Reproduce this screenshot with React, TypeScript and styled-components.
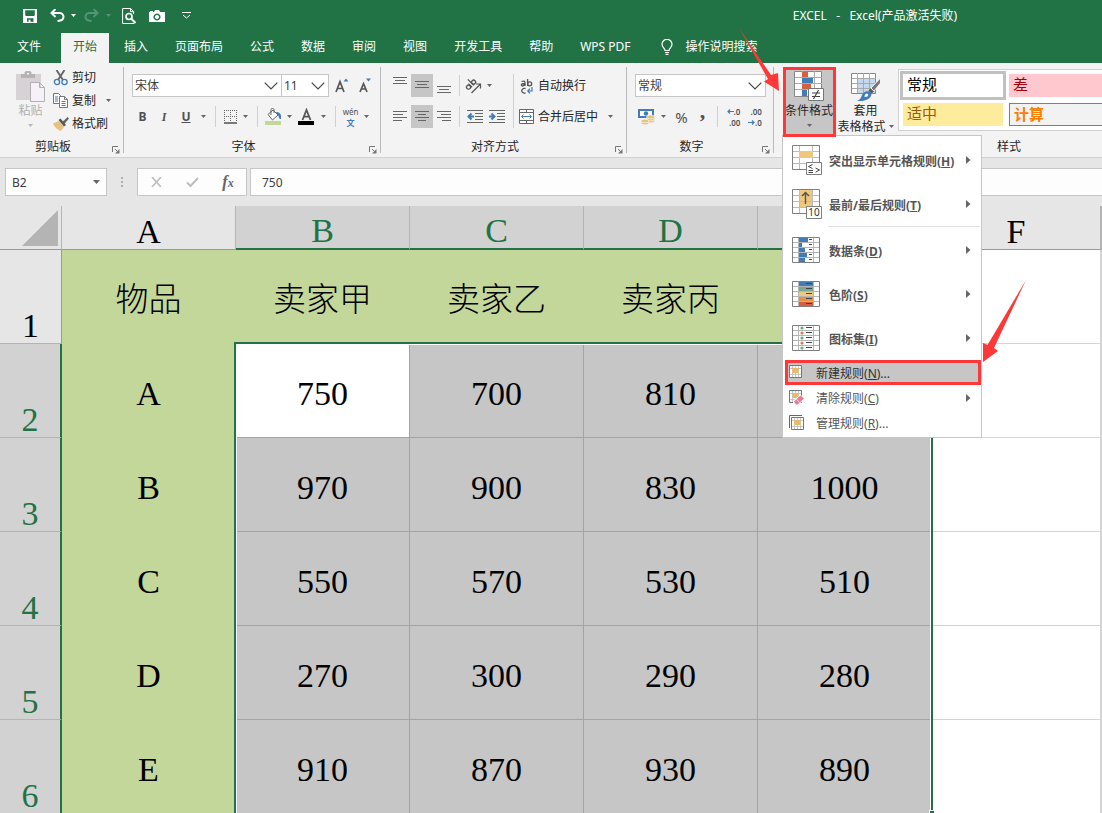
import React from "react";
import styled, { createGlobalStyle, css } from "styled-components";

const UI_FONT = '"Noto Sans", "Noto Sans CJK SC", sans-serif';
const SHEET_FONT = '"Liberation Serif", "Noto Sans CJK SC", serif';
const GREEN = "#217346";
const RED = "#fd3838";
const INK = "#262626";
const BLUE = "#3f7cb8";

const GlobalStyle = createGlobalStyle`
  * { box-sizing: border-box; }
  html, body { margin: 0; height: 100%; overflow: hidden; }
  #root { height: 100%; }
  button, input, select { font: inherit; color: inherit; margin: 0; }
  svg { display: block; flex: none; }
`;

const Page = styled.div`
  display: flex;
  flex-direction: column;
  height: 100vh;
  overflow: hidden;
  background: #fff;
  color: ${INK};
  font: 12px/16px ${UI_FONT};
`;

/* ---------- title bar and tabs ---------- */

const TitleBar = styled.header`
  display: flex;
  align-items: center;
  height: 33px;
  flex: none;
  padding: 0 145px 2px 16px;
  background: ${GREEN};
  color: #fff;
`;

const QuickAccess = styled.div`
  display: flex;
  align-items: center;
`;

const QuickButton = styled.button<{ $w: number; $dim?: boolean }>`
  display: flex;
  align-items: center;
  justify-content: center;
  width: ${(p) => p.$w}px;
  height: 24px;
  padding: 0;
  border: 0;
  background: none;
  color: ${(p) => (p.$dim ? "#559474" : "#fff")};
`;

const WindowTitle = styled.h1`
  margin: 0 0 0 auto;
  font-size: 12px;
  line-height: 16px;
  font-weight: 400;
  white-space: pre;
`;

const TabBar = styled.nav`
  display: flex;
  flex: none;
  gap: 3px;
  height: 30px;
  background: ${GREEN};
`;

const Tab = styled.button<{ $active?: boolean; $file?: boolean }>`
  display: flex;
  align-items: center;
  height: 30px;
  padding: 0 ${(p) => (p.$file ? 17 : 12)}px 2px;
  border: 0;
  background: ${(p) => (p.$active ? "#f3f3f3" : "none")};
  color: ${(p) => (p.$active ? GREEN : "#fff")};
  white-space: nowrap;
`;

const TellMe = styled(Tab)`
  gap: 13px;
  padding-left: 15px;
`;

/* ---------- ribbon ---------- */

const Ribbon = styled.section`
  position: relative;
  z-index: 2;
  display: flex;
  flex: none;
  height: 95px;
  border-bottom: 1px solid #d2d2d2;
  background: #f3f3f3;
`;

const Group = styled.div<{ $w?: number }>`
  display: flex;
  flex-direction: column;
  ${(p) => (p.$w ? css`flex: 0 0 ${p.$w}px;` : css`flex: 1; min-width: 0;`)}
`;

const Divider = styled.div`
  width: 1px;
  flex: none;
  margin: 4px 0;
  background: #b8b8b8;
`;

const GroupBody = styled.div<{ $x?: number; $y?: number }>`
  display: flex;
  height: 73px;
  padding: ${(p) => p.$y ?? 11}px 0 0 ${(p) => p.$x ?? 8}px;
`;

const GroupFooter = styled.div<{ $indent?: number }>`
  display: flex;
  align-items: center;
  height: 21px;
  padding: 0 3px 0 ${(p) => p.$indent ?? 0}px;
`;

const GroupLabel = styled.span`
  flex: 1;
  text-align: center;
`;

const Launcher = styled.button`
  display: flex;
  flex: none;
  margin-left: 6px;
  padding: 6px 0 0;
  width: 8px;
  border: 0;
  background: none;
`;

const Rows = styled.div`
  display: flex;
  flex-direction: column;
  gap: 8px;
`;

const Row = styled.div`
  display: flex;
  align-items: center;
  height: 23px;
`;

const Tool = styled.button<{ $w?: number; $active?: boolean }>`
  display: flex;
  align-items: center;
  justify-content: center;
  flex: none;
  width: ${(p) => p.$w ?? 22}px;
  height: 23px;
  padding: 0;
  border: 0;
  background: ${(p) => (p.$active ? "#c6c6c6" : "none")};
  color: #505050;
`;

const Glyph = styled.span<{ $italic?: boolean; $under?: boolean }>`
  font-size: 12px;
  font-weight: 700;
  font-family: ${(p) => (p.$italic ? '"Liberation Serif", serif' : UI_FONT)};
  font-style: ${(p) => (p.$italic ? "italic" : "normal")};
  text-decoration: ${(p) => (p.$under ? "underline" : "none")};
`;

const ToolSeparator = styled.span<{ $w?: number; $tall?: boolean }>`
  display: flex;
  justify-content: center;
  flex: none;
  width: ${(p) => p.$w ?? 13}px;
  height: ${(p) => (p.$tall ? 54 : 21)}px;
  &::before {
    content: "";
    width: 1px;
    background: #d0d0d0;
  }
`;

const TextTool = styled.button`
  display: flex;
  align-items: center;
  gap: 3px;
  height: 23px;
  padding: 0;
  border: 0;
  background: none;
  color: ${INK};
  white-space: nowrap;
`;

const SmallButtons = styled.div`
  display: flex;
  flex-direction: column;
`;

const BigButton = styled.button<{ $w: number; $muted?: boolean; $active?: boolean; $top?: number }>`
  display: flex;
  flex-direction: column;
  align-items: center;
  gap: 1px;
  flex: none;
  width: ${(p) => p.$w}px;
  height: 70px;
  padding: ${(p) => p.$top ?? 5}px 0 0;
  border: 0;
  background: ${(p) => (p.$active ? "#c6c6c6" : "none")};
  color: ${(p) => (p.$muted ? "#b0b0b0" : INK)};
  line-height: 16px;
  white-space: nowrap;
`;

const BigLine = styled.span`
  display: flex;
  align-items: center;
  gap: 3px;
  line-height: 15px;
`;

const CaretLine = styled.span`
  display: flex;
  align-items: center;
  height: 11px;
`;

const Stack = styled.label<{ $w: number }>`
  display: grid;
  grid-template: 23px / 1fr;
  width: ${(p) => p.$w}px;
  margin-right: -1px;
  align-items: center;
  > * { grid-area: 1 / 1; }
  > svg { justify-self: end; margin-right: 4px; pointer-events: none; }
`;

const Picker = styled.select`
  appearance: none;
  width: 100%;
  height: 23px;
  padding: 0 0 0 2px;
  border: 1px solid #c6c6c6;
  border-radius: 0;
  background: #fff;
  color: #404040;
`;

/* ---------- conditional formatting button and menu ---------- */

const MenuAnchor = styled.div`
  position: relative;
  flex: none;
`;

const Highlight = styled.span`
  position: absolute;
  inset: 0 -1px -1px 0;
  z-index: 2;
  border: 3px solid ${RED};
  pointer-events: none;
`;

const ArrowToButton = styled.svg`
  position: absolute;
  right: 100%;
  top: -39px;
  margin-right: 3px;
  pointer-events: none;
`;

const ArrowToItem = styled.svg`
  position: absolute;
  left: 100%;
  top: 143px;
  pointer-events: none;
`;

const Menu = styled.div`
  position: absolute;
  z-index: 1;
  top: 68px;
  left: -1px;
  width: 200px;
  padding: 2px 0;
  border: 1px solid #c6c6c6;
  background: #fff;
`;

const MenuText = styled.span`
  flex: 1;
  padding-top: 2px;
`;

const MenuItem = styled.button<{ $large?: boolean; $picked?: boolean }>`
  display: flex;
  align-items: center;
  height: ${(p) => (p.$large ? 44 : 25)}px;
  padding: 0 10px 0 ${(p) => (p.$large ? 9 : 6)}px;
  gap: ${(p) => (p.$large ? 7 : 12)}px;
  border: 0;
  background: none;
  color: #555;
  font-weight: ${(p) => (p.$large ? 700 : 400)};
  text-align: left;
  white-space: nowrap;
  ${MenuText} { padding-top: ${(p) => (p.$large ? 4 : 2)}px; }
  ${(p) =>
    p.$picked &&
    css`
      margin-left: 2px;
      padding-left: 4px;
      background: #c6c6c6;
      color: #303030;
      outline: 3px solid ${RED};
      outline-offset: -3px;
    `}
`;

const MenuList = styled.div`
  display: flex;
  flex-direction: column;
`;

const MenuRule = styled.hr`
  width: calc(100% - 46px);
  height: 2px;
  margin: 0 1px 0 45px;
  border: 0;
  border-top: 1px solid #e1e1e1;
`;

/* ---------- style gallery ---------- */

const Gallery = styled.div`
  display: grid;
  grid-template-columns: 106px 106px;
  grid-template-rows: 29px 23px;
  row-gap: 3px;
  flex: 1;
  min-width: 0;
  height: 62px;
  margin: 2px 0 0 2px;
  padding: 1px 0 0 1px;
  border: 1px solid #d0d0d0;
  border-right: 0;
  background: #fff;
  overflow: hidden;
`;

const StyleChip = styled.button<{ $bg: string; $fg: string; $line?: string; $bold?: boolean; $current?: boolean }>`
  height: ${(p) => (p.$current ? 29 : 23)}px;
  align-self: center;
  margin: 0 ${(p) => (p.$current ? 0 : 3)}px;
  padding: 0 0 3px 4px;
  border: ${(p) => (p.$current ? "3px solid #c0c0c0" : p.$line ? `1px solid ${p.$line}` : "0")};
  background: ${(p) => p.$bg};
  color: ${(p) => p.$fg};
  font-size: 15px;
  line-height: 20px;
  font-weight: ${(p) => (p.$bold ? 700 : 400)};
  text-align: left;
`;

/* ---------- formula bar ---------- */

const FormulaBar = styled.div`
  display: flex;
  flex: none;
  height: 48px;
  padding: 10px 0 10px 5px;
  background: #e6e6e6;
`;

const Box = styled.div<{ $w?: number }>`
  display: flex;
  align-items: center;
  min-width: 0;
  flex: ${(p) => (p.$w ? `0 0 ${p.$w}px` : "1")};
  border: 1px solid #c6c6c6;
  border-right-width: ${(p) => (p.$w ? 1 : 0)}px;
  background: #fdfdfd;
`;

const PlainInput = styled.input`
  flex: 1;
  min-width: 0;
  height: 24px;
  padding: 0 0 0 6px;
  border: 0;
  outline: 0;
  background: none;
  color: #404040;
`;

const FormulaInput = styled(PlainInput)`
  padding-left: 11px;
`;

const Grip = styled.div`
  display: flex;
  flex: none;
  align-items: center;
  justify-content: center;
  width: 30px;
`;

const BarGap = styled.span`
  width: 3px;
`;

const FxGlyph = styled.span`
  font: italic 700 16px/16px "Liberation Serif", serif;
  color: #666;
`;

const FxSub = styled.span`
  font-size: 12px;
`;

/* ---------- sheet ---------- */

const Sheet = styled.main`
  position: relative;
  flex: 1;
  min-height: 0;
  overflow: hidden;
`;

const Grid = styled.table`
  width: 100%;
  table-layout: fixed;
  border-collapse: separate;
  border-spacing: 0;
  font: 34px/34px ${SHEET_FONT};
  color: #000;
`;

const SizedCol = styled.col<{ $w: number }>`
  width: ${(p) => p.$w}px;
`;

const ColumnHead = styled.th<{ $on?: boolean }>`
  height: 44px;
  padding: 0;
  vertical-align: bottom;
  font-weight: 400;
  background: ${(p) => (p.$on ? "#d2d2d2" : "#e6e6e6")};
  color: ${(p) => (p.$on ? GREEN : "#000")};
  border-right: 1px solid #b4b4b4;
  border-bottom: ${(p) => (p.$on ? `2px solid ${GREEN}` : "1px solid #999")};
`;

const Corner = styled(ColumnHead)`
  > svg { margin: 0 3px 3px auto; }
`;

const RowHead = styled.th<{ $on?: boolean }>`
  height: 94px;
  padding: 0;
  vertical-align: bottom;
  font-weight: 400;
  background: ${(p) => (p.$on ? "#d2d2d2" : "#e6e6e6")};
  color: ${(p) => (p.$on ? GREEN : "#000")};
  border-right: ${(p) => (p.$on ? `2px solid ${GREEN}` : "1px solid #999")};
  border-bottom: 1px solid #b4b4b4;
`;

type CellKind = "green" | "picked" | "active" | "blank";

const cellLook: Record<CellKind, { bg: string; line: string }> = {
  green: { bg: "#c4d79b", line: "#c4d79b" },
  picked: { bg: "#c6c6c6", line: "#a3a3a3" },
  active: { bg: "#ffffff", line: "#a3a3a3" },
  blank: { bg: "#ffffff", line: "#d4d4d4" },
};

const Cell = styled.td<{ $kind: CellKind; $title?: boolean }>`
  padding: 6px 0 0;
  text-align: center;
  vertical-align: middle;
  white-space: nowrap;
  font-size: ${(p) => (p.$title ? 33 : 34)}px;
  font-weight: ${(p) => (p.$title ? 300 : 400)};
  background: ${(p) => cellLook[p.$kind].bg};
  border-right: 1px solid ${(p) => cellLook[p.$kind].line};
  border-bottom: 1px solid ${(p) => cellLook[p.$kind].line};
`;

const SelectionFrame = styled.div`
  position: absolute;
  left: 234px;
  top: 136px;
  width: 699px;
  height: 480px;
  border: 2px solid ${GREEN};
  box-shadow: inset 0 0 0 1px #fff;
  pointer-events: none;
`;

const FillHandle = styled.div`
  position: absolute;
  left: 929px;
  top: 604px;
  width: 6px;
  height: 6px;
  border: 1px solid #fff;
  background: ${GREEN};
`;

/* ---------- drawings ---------- */

const Caret = ({ color = "#666" }: { color?: string }) => (
  <svg width="5" height="3" viewBox="0 0 5 3"><path d="M0 0h5L2.500 3z" fill={color} /></svg>
);

const Chevron = () => (
  <svg width="14" height="8" viewBox="0 0 14 8"><path d="M.7.7 7 7 13.300.7" fill="none" stroke="#444" strokeWidth="1.200" /></svg>
);

const LauncherIcon = () => (
  <svg width="8" height="8" viewBox="0 0 8 8">
    <path d="M.5 6V.5H6" fill="none" stroke="#777" />
    <path d="M3 3l3 3" stroke="#777" /><path d="M7.500 3v4.500H3z" fill="#777" />
  </svg>
);

const SaveIcon = () => (
  <svg width="14" height="14" viewBox="0 0 14 14">
    <path fill="currentColor" fillRule="evenodd" d="M0 0h14v14H0zM2.200 1.300v5l.8.700h8l.8-.7v-5zM4 9.300v3.400h1.600v-2h1.800v2H10.500V9.300z" />
  </svg>
);

const UndoIcon = ({ flip }: { flip?: boolean }) => (
  <svg width="15" height="13" viewBox="0 0 15 13">
    <g transform={flip ? "matrix(-1 0 0 1 15 0)" : undefined} fill="none" stroke="currentColor" strokeWidth="2">
      <path d="M2 4h7.500a3.700 3.700 0 0 1 .5 7.500l-2.500 .8" />
      <path d="M5.500 0 1.500 4l4 4" />
    </g>
  </svg>
);

const PreviewIcon = () => (
  <svg width="15" height="16" viewBox="0 0 15 16" fill="none" stroke="currentColor">
    <path d="M12 15.500H.6V.5h8l3 3V6M8.500.5v3.200h3" />
    <circle cx="7" cy="8.500" r="3" strokeWidth="1.700" />
    <path d="m9.300 10.800 4.200 4.200" strokeWidth="2" />
  </svg>
);

const CameraIcon = () => (
  <svg width="16" height="12" viewBox="0 0 16 12">
    <path fill="currentColor" fillRule="evenodd" d="M0 2h1V1h3v1h1l1-2h4l1 2h5v10H0zM8 3.500a3.500 3.500 0 1 0 .01 0zM8 5a2 2 0 1 1-.01 0z" />
  </svg>
);

const CustomizeIcon = () => (
  <svg width="9" height="7" viewBox="0 0 9 7" fill="none" stroke="currentColor">
    <path d="M0 .5h9M1 3l3.500 3L8 3" />
  </svg>
);

const BulbIcon = () => (
  <svg width="12" height="16" viewBox="0 0 12 16" fill="none" stroke="currentColor" strokeWidth="1.200">
    <path d="M4 11.500C4 9 1 8.500 1 5.300a5 5 0 0 1 10 0C11 8.500 8 9 8 11.500zM4 13.500h4M4.500 15.400h3" />
  </svg>
);

const PasteIcon = () => (
  <svg width="29" height="31" viewBox="0 0 29 31">
    <path d="M0 3h25v26H0z" fill="#d6d2d6" />
    <path d="M5 7V3h3.500V1.200L10 0h4l1.500 1.200V3H19v4zM11 2v2h2V2z" fill="#b4b4b4" fillRule="evenodd" />
    <path d="M14.500 11.500h9l5 5v14h-14zM23.500 11.500v5h5" fill="#f6f1f8" stroke="#b0b0b0" />
  </svg>
);

const CutIcon = () => (
  <svg width="16" height="16" viewBox="0 0 16 16">
    <path d="M3.500 0 10 10M11.500 0 5 10" stroke="#666" strokeWidth="1.900" />
    <circle cx="4" cy="12" r="2.600" fill="none" stroke={BLUE} strokeWidth="1.300" />
    <circle cx="11.500" cy="12" r="2.600" fill="none" stroke={BLUE} strokeWidth="1.300" />
  </svg>
);

const CopyIcon = () => (
  <svg width="16" height="15" viewBox="0 0 16 15">
    <path d="M.5.500h5l2 2v8h-7z" fill="#fff" stroke="#777" />
    <path d="M2 4h3M2 6h3M2 8h3" stroke={BLUE} />
    <path d="M6.500 3.500h5l3 3v8h-8z" fill="#fff" stroke="#777" />
    <path d="M11.500 3.500v3h3" fill="none" stroke="#777" />
    <path d="M8.500 8.500h4M8.500 10.500h4M8.500 12.500h4" stroke={BLUE} />
  </svg>
);

const BrushIcon = () => (
  <svg width="16" height="14" viewBox="0 0 16 14">
    <path d="m0 6.500 6-2.500 5 6-3.500 4C5 13 2 11 0 6.500z" fill="#e9c07c" />
    <path d="m5.500 3 2-1.500L13 8l-2 1.500z" fill="#555" />
    <path d="m9 4.500 2-1L14.500 0 16 1.500 13 5l-1.500 2.200z" fill="#666" />
  </svg>
);

const SizeIcon = ({ up }: { up?: boolean }) => (
  <svg width="14" height="15" viewBox="0 0 14 15">
    <path d={up ? "M1 14 5 3.700 9 14M2.600 10.500h4.800" : "M2 14 5.500 5.700 9 14M3.400 11h4.200"} fill="none" stroke="#555" strokeWidth="1.700" />
    <path d={up ? "M8.500 3.500 11 .5l2.500 3z" : "M8 .5h5L10.500 3.500z"} fill={BLUE} />
  </svg>
);

const BordersIcon = () => (
  <svg width="13" height="14" viewBox="0 0 13 14" fill="none" stroke="#666">
    <path d="M.5 0v12M6.500 0v12M12.500 0v12M0 .5h13M0 6.500h13" strokeDasharray="1 1" />
    <path d="M0 13h13" strokeWidth="1.400" stroke="#444" />
  </svg>
);

const FillIcon = () => (
  <svg width="17" height="17" viewBox="0 0 17 17">
    <path d="M3 6.500 8 2l5 5-5.500 5z" fill="#fff" stroke="#666" />
    <path d="M6 7V1.500c0-1.500 3-1.500 3 0V5" fill="none" stroke="#666" />
    <path d="M11 4c4 0 5.500 2 5 7-1.500 0-2-.5-2.500-3z" fill={BLUE} />
    <path d="M0 13h16v4H0z" fill="#c4d79b" />
  </svg>
);

const FontColorIcon = () => (
  <svg width="17" height="17" viewBox="0 0 17 17">
    <path d="M4.500 12 8.500 2l4 10M6 8.700h5" fill="none" stroke="#555" strokeWidth="1.800" />
    <path d="M0 13h16v4H0z" fill="#000" />
  </svg>
);

const Pinyin = styled.span`
  display: flex;
  flex-direction: column;
  align-items: center;
  font-size: 8px;
  line-height: 12px;
  color: #505050;
`;

const PinyinHan = styled.span`
  color: ${BLUE};
  font-weight: 700;
  line-height: 10px;
`;

const Lines = ({ rows, y = 0 }: { rows: [number, number][]; y?: number }) => (
  <svg width="14" height="17" viewBox="0 0 14 17">
    {rows.map(([x, w], i) => (
      <rect key={i} x={x} y={y + i * 3} width={w} height="1" fill="#666" />
    ))}
  </svg>
);

const OrientationIcon = () => (
  <svg width="17" height="16" viewBox="0 0 17 16" fill="none" stroke="#555" strokeWidth="1.300">
    <g transform="rotate(-45 6 6)">
      <circle cx="2" cy="6.500" r="2" /><path d="M4.500 4v5M7 .5v8.500" /><circle cx="9.200" cy="6.500" r="2" />
    </g>
    <path d="m6.500 15 8.500-8.500M11 6h4.500v4.500" strokeWidth="1.200" />
  </svg>
);

const IndentIcon = ({ out }: { out?: boolean }) => (
  <svg width="16" height="13" viewBox="0 0 16 13">
    <path d="M0 .5h16M8 3.500h8M8 6.500h8M8 9.500h8M0 12.500h16" stroke="#666" />
    <path d={out ? "M7 6.500H2M4.500 3.500l-3 3 3 3" : "M0 6.500h5M2.500 3.500l3 3-3 3"} fill="none" stroke={BLUE} strokeWidth="2" />
  </svg>
);

const WrapIcon = () => (
  <svg width="16" height="16" viewBox="0 0 16 16" fill="none" stroke="#555" strokeWidth="1.300">
    <path d="M2.500 3.500c3-1 3.500 0 3.500 1.500v3M6 5.500c-5 0-4 3-2 2.400L6 6.500M8.600 1v7" />
    <circle cx="10.700" cy="5.800" r="2" />
    <path d="M6.500 10.500c-5-1-5 5.500 0 4.500" />
    <path d="M13 9v4H9M11 10.700 8.800 13l2.200 2.300" stroke={BLUE} strokeWidth="1.200" />
  </svg>
);

const MergeIcon = () => (
  <svg width="16" height="15" viewBox="0 0 16 15" fill="none" stroke="#666">
    <path d="M.5.500h14v14H.5zM.5 3.500h14M.5 11.500h14M7.500.5v3M7.500 11.500v3" fill="#fff" />
    <path d="M3 7.500h9M4.500 5.500l-2 2 2 2M10.500 5.500l2 2-2 2" stroke={BLUE} />
  </svg>
);

const CurrencyIcon = () => (
  <svg width="17" height="16" viewBox="0 0 17 16">
    <path d="M0 0h16v9H0z" fill={BLUE} /><path d="M2 2h12v5H2z" fill="#fff" />
    <circle cx="8" cy="4.500" r="2.200" fill={BLUE} />
    <g fill="#e9c07c" stroke="#f3f3f3" strokeWidth=".7">
      <ellipse cx="12.500" cy="12" rx="4" ry="1.900" /><ellipse cx="12.500" cy="10" rx="4" ry="1.900" /><ellipse cx="12.500" cy="8" rx="4" ry="1.900" />
      <ellipse cx="7" cy="14" rx="4" ry="1.800" /><ellipse cx="7" cy="12" rx="4" ry="1.800" />
    </g>
  </svg>
);

const PercentSign = styled.span`
  font-size: 15px;
`;

const CommaSign = styled.span`
  font: 700 22px/12px "Liberation Serif", serif;
  padding-bottom: 12px;
`;

const DecimalIcon = styled.span`
  display: flex;
  flex-direction: column;
  align-items: flex-end;
  font-size: 8px;
  line-height: 11px;
  font-weight: 600;
`;

const DecimalLine = styled.span`
  display: flex;
  align-items: center;
  height: 11px;
`;

const SmallArrow = ({ left }: { left?: boolean }) => (
  <svg width="7" height="5" viewBox="0 0 7 5" fill="none" stroke={BLUE} strokeWidth="1.200">
    <path d={left ? "M7 2.500H1M3 .5l-2 2 2 2" : "M0 2.500h6M4 .5l2 2-2 2"} />
  </svg>
);

const CondFormatIcon = () => (
  <svg width="31" height="31" viewBox="0 0 31 31">
    <path d="M.5.500h27v25H.5z" fill="#fff" stroke="#888" />
    <path d="M1 6.500h27M1 12.500h27M1 18.500h27M8.500 0v25M20.500 0v25" stroke="#aaa" />
    <path d="M8 1h6v5H8zM8 13h9v5H8z" fill="#d65f3d" />
    <path d="M8 7h11v5H8zM8 19h5v6H8z" fill={BLUE} />
    <path d="M14.500 17.500h15v12h-15z" fill="#fff" stroke="#777" />
    <path d="M18 22h8M18 25.500h8M24.500 19l-5 9" stroke="#444" strokeWidth="1.200" />
  </svg>
);

const TableFormatIcon = () => (
  <svg width="30" height="29" viewBox="0 0 30 29">
    <path d="M.5.500h24v20H.5z" fill="#fff" stroke="#888" />
    <path d="M7 6h17v14H7z" fill="#c5d9ee" />
    <path d="M1 5.500h24M1 10.500h24M1 15.500h24M6.500 0v20M12.500 0v20M18.500 0v20" stroke="#a9a9a9" />
    <path d="M29.500 5v5L23 18l-3-3z" fill="#777" stroke="#f3f3f3" />
    <path d="m19.500 15.500 3.500 3-2.500 2-3-3z" fill="#555" />
    <path d="M18 18.500c3 1 3 4 1 6-3 3-8 4-13 3.500 3-1 4-3 5-6 1.500-3 4-4.500 7-3.500z" fill={BLUE} />
    <path d="M16 20.500c1.500.5 1.500 2 .5 3l-3 .5c0-2 1-3.500 2.500-3.500z" fill="#fff" />
  </svg>
);

const gridLines = "M0 6.500h28M0 12.500h28M0 18.500h28M7.500 0v25M20.500 0v25";

const HighlightRuleIcon = () => (
  <svg width="30" height="30" viewBox="0 0 30 30">
    <path d="M.5.500h27v24H.5z" fill="#fff" /><path d={gridLines} stroke="#bbb" />
    <path d="M.5.500h27v24H.5z" fill="none" stroke="#808080" />
    <path d="M7 6h14v7H7z" fill="#edc87e" />
    <path d="M14.500 17.500h15v12h-15z" fill="#fff" stroke="#808080" />
    <path d="M20.500 19.500 16.500 21.500l4 2M16.500 25.500h4.500M16.500 27.500h4.500M23.500 23l4 2-4 2.200" fill="none" stroke="#444" />
  </svg>
);

const TopRuleIcon = () => (
  <svg width="30" height="30" viewBox="0 0 30 30">
    <path d="M.5.500h27v24H.5z" fill="#fff" /><path d="M8 1h12v18H8z" fill="#edc87e" /><path d={gridLines} stroke="#bbb" />
    <path d="M.5.500h27v24H.5z" fill="none" stroke="#808080" />
    <path d="M13.500 15V3.500M10 7l3.500-3.500L17 7" fill="none" stroke="#555" strokeWidth="1.400" />
    <path d="M14.500 17.500h15v12h-15z" fill="#fff" stroke="#808080" />
    <text x="22" y="27" fontSize="10" fontWeight="400" textAnchor="middle" fill="#333">10</text>
  </svg>
);

const bandLines = "M0 5.500h28M0 10.500h28M0 15.500h28M0 20.500h28M6.500 0v26M21.500 0v26";

const BandIcon = ({ kind }: { kind: "bars" | "scale" | "set" }) => {
  const scale = ["#3f7cb8", "#76a797", "#edc87e", "#e99045", "#d65f3d"];
  const widths = [9, 3, 6, 8, 6];
  return (
    <svg width="28" height="26" viewBox="0 0 28 26">
      <path d="M.5.500h27v25H.5z" fill="#fff" />
      <path d={bandLines} stroke="#b5b5b5" />
      {scale.map((c, i) => (
        <g key={c}>
          {kind === "bars" && <rect x="7" y={i * 5 + 1} width={widths[i]} height="4" fill={BLUE} />}
          {kind === "scale" && <rect x="7" y={i * 5 + 1} width="14" height="4" fill={c} />}
          {kind === "set" && <circle cx="10" cy={i * 5 + 3} r="1.600" fill={i % 2 ? "#e07b39" : "#6aa58f"} />}
          <rect x={kind === "bars" ? 17 : 14} y={i * 5 + 2} width={kind === "bars" ? 3 : 6} height="1" fill="#444" />
        </g>
      ))}
      <path d="M.5.500h27v25H.5z" fill="none" stroke="#808080" />
    </svg>
  );
};

const SmallRuleIcon = ({ kind }: { kind: "new" | "clear" | "manage" }) => (
  <svg width="15" height="15" viewBox="0 0 15 15">
    {kind === "manage" && <path d="M.5 13V.5H13" fill="none" stroke="#666" />}
    <g transform={kind === "manage" ? "translate(2 2)" : undefined}>
      <path d="M.5.500h12v12H.5z" fill="#fff" stroke="#777" />
      <path d="M3.500 1v11M9.500 1v11M1 3.500h11M1 9.500h11M6.500 1v11" stroke="#bbb" strokeWidth=".8" />
      <path d="M3.500 3h6v5h-6z" fill="#edb962" />
    </g>
    {kind === "clear" && (
      <g>
        <path d="m4 11 7-6 4 1.500v3L9 15H7l-3-2z" fill="#fff" />
        <path d="m5 11.500 6.500-6 3.500 3-6.500 6H7z" fill="#e67b91" /><path d="m7.500 9.500 3 2.700" stroke="#fff" strokeWidth=".8" />
      </g>
    )}
  </svg>
);

const SubArrow = () => (
  <svg width="5" height="8" viewBox="0 0 5 8"><path d="M0 0l4.500 4L0 8z" fill="#666" /></svg>
);

/* ---------- parts with content ---------- */

const tabsAfterHome = ["插入", "页面布局", "公式", "数据", "审阅", "视图", "开发工具", "帮助", "WPS PDF"];

const largeItems = [
  { label: "突出显示单元格规则", hot: "H", icon: <HighlightRuleIcon /> },
  { label: "最前/最后规则", hot: "T", icon: <TopRuleIcon /> },
  { label: "数据条", hot: "D", icon: <BandIcon kind="bars" /> },
  { label: "色阶", hot: "S", icon: <BandIcon kind="scale" /> },
  { label: "图标集", hot: "I", icon: <BandIcon kind="set" /> },
];

const IconSlot = styled.span`
  display: flex;
  width: 30px;
`;

const Hot = ({ letter }: { letter: string }) => (
  <>(<u>{letter}</u>)</>
);

const GroupFoot = ({ label, launcher = true, indent }: { label: string; launcher?: boolean; indent?: number }) => (
  <GroupFooter $indent={indent}>
    <GroupLabel>{label}</GroupLabel>
    {launcher && <Launcher aria-label={`${label} 设置`}><LauncherIcon /></Launcher>}
  </GroupFooter>
);

const CaretTool = ({ name }: { name: string }) => (
  <Tool $w={12} aria-label={name}><Caret /></Tool>
);

const ConditionalMenu = () => (
  <Menu role="menu">
    <MenuList>
      {largeItems.map((item, i) => (
        <React.Fragment key={item.hot}>
          {i === 2 && <MenuRule />}
          <MenuItem $large role="menuitem">
            <IconSlot>{item.icon}</IconSlot>
            <MenuText>{item.label}<Hot letter={item.hot} /></MenuText>
            <SubArrow />
          </MenuItem>
        </React.Fragment>
      ))}
      <MenuItem $picked role="menuitem">
        <SmallRuleIcon kind="new" /><MenuText>新建规则<Hot letter="N" />...</MenuText>
      </MenuItem>
      <MenuItem role="menuitem">
        <SmallRuleIcon kind="clear" /><MenuText>清除规则<Hot letter="C" /></MenuText><SubArrow />
      </MenuItem>
      <MenuItem role="menuitem">
        <SmallRuleIcon kind="manage" /><MenuText>管理规则<Hot letter="R" />...</MenuText>
      </MenuItem>
    </MenuList>
    <ArrowToItem width="47" height="84" viewBox="981 278 47 84">
      <path d="M1026 279 994 347l4 3-15 11v-19l4.500 2z" fill={RED} />
    </ArrowToItem>
  </Menu>
);

const rows = [
  ["A", "750", "700", "810", ""],
  ["B", "970", "900", "830", "1000"],
  ["C", "550", "570", "530", "510"],
  ["D", "270", "300", "290", "280"],
  ["E", "910", "870", "930", "890"],
];

export default function App() {
  return (
    <Page>
      <GlobalStyle />
      <TitleBar>
        <QuickAccess>
          <QuickButton $w={27} aria-label="保存"><SaveIcon /></QuickButton>
          <QuickButton $w={28} aria-label="撤消"><UndoIcon /></QuickButton>
          <QuickButton $w={5} aria-label="撤消选项"><Caret color="#fff" /></QuickButton>
          <QuickButton $w={30} $dim aria-label="恢复"><UndoIcon flip /></QuickButton>
          <QuickButton $w={5} $dim aria-label="恢复选项"><Caret color="#559474" /></QuickButton>
          <QuickButton $w={36} aria-label="打印预览"><PreviewIcon /></QuickButton>
          <QuickButton $w={20} aria-label="照相机"><CameraIcon /></QuickButton>
          <QuickButton $w={38} aria-label="自定义快速访问工具栏"><CustomizeIcon /></QuickButton>
        </QuickAccess>
        <WindowTitle>{"EXCEL   -   Excel(产品激活失败)"}</WindowTitle>
      </TitleBar>
      <TabBar>
        <Tab $file>文件</Tab>
        <Tab $active>开始</Tab>
        {tabsAfterHome.map((t) => <Tab key={t}>{t}</Tab>)}
        <TellMe><BulbIcon />操作说明搜索</TellMe>
      </TabBar>

      <Ribbon>
        <Group $w={123}>
          <GroupBody $y={3}>
            <BigButton $w={45} $muted>
              <PasteIcon />
              粘贴
              <CaretLine><Caret color="#b8b8b8" /></CaretLine>
            </BigButton>
            <SmallButtons>
              <TextTool><CutIcon />剪切</TextTool>
              <Row>
                <TextTool><CopyIcon />复制</TextTool>
                <Tool $w={24} aria-label="复制选项"><Caret /></Tool>
              </Row>
              <TextTool><BrushIcon />格式刷</TextTool>
            </SmallButtons>
          </GroupBody>
          <GroupFoot label="剪贴板" />
        </Group>
        <Divider />

        <Group $w={256}>
          <GroupBody>
            <Rows>
              <Row>
                <Stack $w={150}><Picker aria-label="字体"><option>宋体</option></Picker><Chevron /></Stack>
                <Stack $w={48}><Picker aria-label="字号"><option>11</option></Picker><Chevron /></Stack>
                <Tool $w={28} aria-label="增大字号"><SizeIcon up /></Tool>
                <Tool $w={18} aria-label="减小字号"><SizeIcon /></Tool>
              </Row>
              <Row>
                <Tool $w={21} aria-label="加粗"><Glyph>B</Glyph></Tool>
                <Tool aria-label="倾斜"><Glyph $italic>I</Glyph></Tool>
                <Tool aria-label="下划线"><Glyph $under>U</Glyph></Tool>
                <CaretTool name="下划线选项" />
                <ToolSeparator />
                <Tool $w={17} aria-label="边框"><BordersIcon /></Tool>
                <CaretTool name="边框选项" />
                <ToolSeparator />
                <Tool $w={19} aria-label="填充颜色"><FillIcon /></Tool>
                <CaretTool name="填充颜色选项" />
                <Tool aria-label="字体颜色"><FontColorIcon /></Tool>
                <CaretTool name="字体颜色选项" />
                <ToolSeparator $w={12} />
                <Tool $w={19} aria-label="拼音指南"><Pinyin>wén<PinyinHan>文</PinyinHan></Pinyin></Tool>
                <CaretTool name="拼音选项" />
              </Row>
            </Rows>
          </GroupBody>
          <GroupFoot label="字体" />
        </Group>
        <Divider />

        <Group $w={245}>
          <GroupBody>
            <Rows>
              <Row>
                <Tool aria-label="顶端对齐"><Lines rows={[[0, 14], [2, 10], [0, 14]]} /></Tool>
                <Tool $active aria-label="垂直居中"><Lines y={4} rows={[[0, 14], [2, 10], [0, 14]]} /></Tool>
                <Tool aria-label="底端对齐"><Lines y={9} rows={[[0, 14], [2, 10], [0, 14]]} /></Tool>
                <ToolSeparator $w={9} />
                <Tool $w={19} aria-label="方向"><OrientationIcon /></Tool>
                <CaretTool name="方向选项" />
              </Row>
              <Row>
                <Tool aria-label="左对齐"><Lines y={3} rows={[[0, 14], [0, 10], [0, 14], [0, 9]]} /></Tool>
                <Tool $active aria-label="居中"><Lines y={3} rows={[[0, 14], [3, 8], [0, 14], [3, 8]]} /></Tool>
                <Tool aria-label="右对齐"><Lines y={3} rows={[[0, 14], [4, 10], [0, 14], [5, 9]]} /></Tool>
                <ToolSeparator $w={9} />
                <Tool aria-label="减少缩进量"><IndentIcon out /></Tool>
                <Tool aria-label="增加缩进量"><IndentIcon /></Tool>
              </Row>
            </Rows>
            <ToolSeparator $w={11} $tall />
            <Rows>
              <TextTool><WrapIcon />自动换行</TextTool>
              <Row>
                <TextTool><MergeIcon />合并后居中</TextTool>
                <Tool $w={24} aria-label="合并选项"><Caret /></Tool>
              </Row>
            </Rows>
          </GroupBody>
          <GroupFoot label="对齐方式" />
        </Group>
        <Divider />

        <Group $w={146}>
          <GroupBody>
            <Rows>
              <Row><Stack $w={131}><Picker aria-label="数字格式"><option>常规</option></Picker><Chevron /></Stack></Row>
              <Row>
                <Tool aria-label="会计数字格式"><CurrencyIcon /></Tool>
                <CaretTool name="会计数字格式选项" />
                <Tool $w={25} aria-label="百分比样式"><PercentSign>%</PercentSign></Tool>
                <Tool $w={17} aria-label="千位分隔样式"><CommaSign>,</CommaSign></Tool>
                <ToolSeparator />
                <Tool $w={19} aria-label="增加小数位数">
                  <DecimalIcon>
                    <DecimalLine><SmallArrow left />.0</DecimalLine>
                    <DecimalLine>.00</DecimalLine>
                  </DecimalIcon>
                </Tool>
                <Tool $w={24} aria-label="减少小数位数">
                  <DecimalIcon>
                    <DecimalLine>.00</DecimalLine>
                    <DecimalLine><SmallArrow />.0</DecimalLine>
                  </DecimalIcon>
                </Tool>
              </Row>
            </Rows>
          </GroupBody>
          <GroupFoot label="数字" />
        </Group>
        <Divider />

        <Group>
          <GroupBody $x={9} $y={4}>
            <MenuAnchor>
              <BigButton $w={52} $active $top={4} aria-haspopup="menu" aria-expanded="true">
                <CondFormatIcon />
                条件格式
                <CaretLine><Caret /></CaretLine>
              </BigButton>
              <Highlight />
              <ArrowToButton width="41" height="64" viewBox="739 28 41 64">
                <path d="M739 28 771 75l7-2 1 18-15-9.500 4-2.500z" fill={RED} />
              </ArrowToButton>
              <ConditionalMenu />
            </MenuAnchor>
            <BigButton $w={61} $top={6}>
              <TableFormatIcon />
              <BigLine>套用</BigLine>
              <BigLine>表格格式<Caret /></BigLine>
            </BigButton>
            <Gallery>
              <StyleChip $current $bg="#fff" $fg="#000">常规</StyleChip>
              <StyleChip $bg="#ffc7ce" $fg="#9c0006">差</StyleChip>
              <StyleChip $bg="#ffeb9c" $fg="#9c5700">适中</StyleChip>
              <StyleChip $bg="#f2f2f2" $fg="#fa7d00" $line="#7f7f7f" $bold>计算</StyleChip>
            </Gallery>
          </GroupBody>
          <GroupFoot label="样式" launcher={false} indent={145} />
        </Group>
      </Ribbon>

      <FormulaBar>
        <Box $w={102}>
          <PlainInput aria-label="名称框" defaultValue="B2" />
          <Tool $w={20} aria-label="名称列表"><svg width="7" height="4" viewBox="0 0 7 4"><path d="M0 0h7L3.500 4z" fill="#666" /></svg></Tool>
        </Box>
        <Grip><svg width="2" height="10" viewBox="0 0 2 10"><path d="M0 0h2v2H0zM0 4h2v2H0zM0 8h2v2H0z" fill="#b0b0b0" /></svg></Grip>
        <Box $w={110}>
          <Tool $w={36} aria-label="取消"><svg width="11" height="10" viewBox="0 0 11 10"><path d="m1 0 9 10M10 0 1 10" stroke="#bdbdbd" strokeWidth="1.600" /></svg></Tool>
          <Tool $w={36} aria-label="输入"><svg width="13" height="10" viewBox="0 0 13 10"><path d="m1 5.500 3.500 3.500L12 1" fill="none" stroke="#bdbdbd" strokeWidth="2" /></svg></Tool>
          <Tool $w={36} aria-label="插入函数"><FxGlyph>f<FxSub>x</FxSub></FxGlyph></Tool>
        </Box>
        <BarGap />
        <Box><FormulaInput aria-label="编辑栏" defaultValue="750" /></Box>
      </FormulaBar>

      <Sheet>
        <Grid>
          <colgroup>
            <SizedCol $w={62} />
            {["A", "B", "C", "D", "E"].map((c) => <SizedCol key={c} $w={174} />)}
            <SizedCol $w={169} />
            <col />
          </colgroup>
          <thead>
            <tr>
              <Corner aria-label="全选"><svg width="36" height="36" viewBox="0 0 36 36"><path d="M36 0v36H0z" fill="#b4b4b4" /></svg></Corner>
              <ColumnHead>A</ColumnHead>
              {["B", "C", "D", "E"].map((c) => <ColumnHead key={c} $on>{c}</ColumnHead>)}
              <ColumnHead>F</ColumnHead>
              <ColumnHead />
            </tr>
          </thead>
          <tbody>
            <tr>
              <RowHead>1</RowHead>
              {["物品", "卖家甲", "卖家乙", "卖家丙", ""].map((t, i) => <Cell key={i} $kind="green" $title>{t}</Cell>)}
              <Cell $kind="blank" /><Cell $kind="blank" />
            </tr>
            {rows.map((r, y) => (
              <tr key={y}>
                <RowHead $on>{y + 2}</RowHead>
                {r.map((v, x) => (
                  <Cell key={x} $kind={x === 0 ? "green" : x === 1 && y === 0 ? "active" : "picked"}>{v}</Cell>
                ))}
                <Cell $kind="blank" /><Cell $kind="blank" />
              </tr>
            ))}
          </tbody>
        </Grid>
        <SelectionFrame />
        <FillHandle />
      </Sheet>
    </Page>
  );
}
